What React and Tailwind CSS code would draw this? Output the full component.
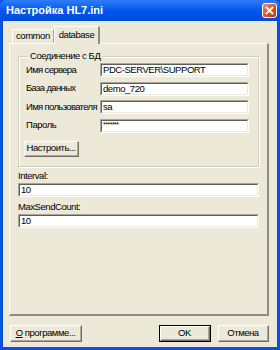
import React from 'react';

const font = { fontFamily: '"Liberation Sans", Arial, sans-serif' };
const txt = 'text-[9.5px] tracking-[-0.45px] text-black whitespace-nowrap';

// sunken edit box, classic 3D look
const Field = ({ value, className = '' }) => (
  <div className={`border-t border-l border-[#A7A69B] border-b border-r border-b-white border-r-white ${className}`}>
    <div className={`h-full bg-white border-t border-l border-[#5E5E58] border-b border-r border-b-[#ECE9D8] border-r-[#ECE9D8] pl-[1px] flex items-center leading-[12px] overflow-hidden ${txt}`}>
      {value}
    </div>
  </div>
);

const Button = ({ children, className = '', isDefault = false }) => (
  <div className={`${isDefault ? 'border border-black' : ''} ${className}`}>
    <div className="h-full border-t border-l border-white border-b border-r border-b-[#716F64] border-r-[#716F64]">
      <div className={`h-full flex items-center justify-center border-b border-r border-b-[#ACA899] border-r-[#ACA899] ${txt}`}>
        {children}
      </div>
    </div>
  </div>
);

const Row = ({ label, value }) => (
  <div className="flex items-center h-[14px]">
    <span className="w-[74px] text-[9.5px] tracking-[-0.65px] text-black whitespace-nowrap">{label}</span>
    <Field value={value} className="w-[149px] h-[14px]" />
  </div>
);

export default function App() {
  return (
    <div className="w-[280px] h-[350px] flex flex-col bg-[#0A50DE] select-none" style={font}>
      {/* title bar */}
      <div className="h-[21px] flex items-center justify-between pl-[6px] pr-[3px] bg-gradient-to-b from-[#2E7CF6] via-[#0058EE] to-[#0049D8] rounded-t-[6px]">
        <span className="text-white font-bold text-[11px] whitespace-nowrap">Настройка HL7.ini</span>
        <div className="w-[15px] h-[15px] rounded-[3px] border border-white bg-gradient-to-br from-[#F08A66] via-[#E1532A] to-[#C43A14] flex items-center justify-center">
          <svg width="9" height="9" viewBox="0 0 9 9">
            <path d="M1.5 1.5 L7.5 7.5 M7.5 1.5 L1.5 7.5" stroke="white" strokeWidth="1.8" strokeLinecap="square" />
          </svg>
        </div>
      </div>

      {/* body */}
      <div className="flex-1 mx-[3px] mb-[3px] bg-[#ECE9D8] flex flex-col pl-[6px] pr-[8px] pt-[5px]">
        {/* tabs */}
        <div className="flex items-end h-[17px] pl-[3px] relative z-10">
          <div className={`h-[14px] px-[3px] border-t border-l border-white border-r border-r-[#ACA899] flex items-center ${txt}`}>
            common
          </div>
          <div className={`h-[18px] -mb-[1px] px-[4px] bg-[#ECE9D8] border-t border-l border-white border-r-2 border-r-[#8E8C81] flex items-start pt-[1px] ${txt}`}>
            database
          </div>
        </div>

        {/* tab panel */}
        <div className="h-[273px] border-t border-l border-white border-b-2 border-r-2 border-b-[#8E8C81] border-r-[#8E8C81] px-[8px] pt-[7px]">
          {/* group box */}
          <fieldset className="border border-[#D0CEBF] shadow-[inset_1px_1px_0_#fff,1px_1px_0_#fff] px-[7px] pb-[9px] pt-0 m-0">
            <legend className={`px-[2px] ml-[2px] leading-[10px] ${txt}`}>Соединение с БД</legend>
            <div className="flex flex-col gap-[4.5px] mt-[2px]">
              <Row label="Имя сервера" value="PDC-SERVER\SUPPORT" />
              <Row label="База данных" value="demo_720" />
              <Row label="Имя пользователя" value="sa" />
              <div className="flex items-center h-[14px]">
                <span className={`w-[74px] ${txt}`}>Пароль</span>
                <Field value={<span className="self-start text-[7px] leading-[7px] tracking-[-0.5px]">*******</span>} className="w-[149px] h-[14px]" />
              </div>
            </div>
            <Button className="w-[55px] h-[16px] mt-[8px] ml-[-2px]">Настроить...</Button>
          </fieldset>

          <div className={`mt-[3px] leading-[12px] ${txt}`}>Interval:</div>
          <Field value="10" className="h-[14px] mt-[1px]" />
          <div className={`mt-[4px] leading-[12px] ${txt}`}>MaxSendCount:</div>
          <Field value="10" className="h-[14px] mt-[1px]" />
        </div>

        {/* bottom buttons */}
        <div className="flex items-center mt-[9px] pl-[1px]">
          <Button className="w-[72px] h-[17px]">
            <span><span className="underline">О</span> программе...</span>
          </Button>
          <div className="flex-1" />
          <Button isDefault className="w-[52px] h-[17px]">OK</Button>
          <Button className="w-[51px] h-[17px] ml-[7px]">Отмена</Button>
        </div>
      </div>
    </div>
  );
}
